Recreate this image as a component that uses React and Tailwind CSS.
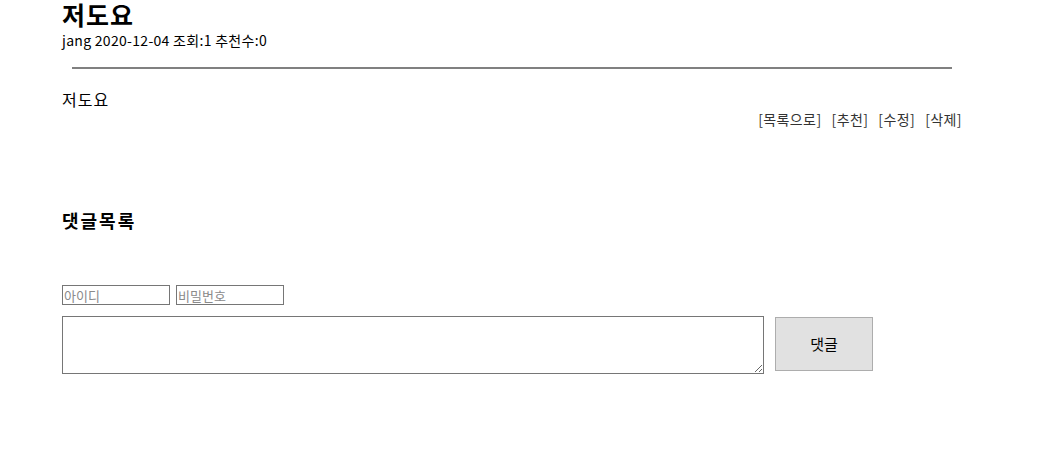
import { useState } from 'react';

const font = "font-['Malgun_Gothic','Noto_Sans_CJK_KR',sans-serif]";

const App = () => {
  const [comment, setComment] = useState('');

  return (
    <div className={`min-h-[470px] bg-white text-black ${font}`}>
      <div className="ml-[62px] w-[900px]">
        <h1 className="text-[25px] font-bold leading-[29px] tracking-[1px]">저도요</h1>
        <p className="text-[14px] leading-[20px] tracking-[0.3px] mt-[1px]">jang 2020-12-04 조회:1 추천수:0</p>
        <hr className="mx-[10px] mt-[17px] border-0 h-[2px] bg-[#808080]" />
        <p className="mt-[19px] text-[16px] leading-[22px] tracking-[1px]">저도요</p>
        <div className="flex justify-end gap-[10px] text-[14px] leading-[18px] tracking-[0.4px] text-[#333]">
          <a href="#">[목록으로]</a>
          <a href="#">[추천]</a>
          <a href="#">[수정]</a>
          <a href="#">[삭제]</a>
        </div>
        <h3 className="mt-[80px] text-[18px] font-bold leading-[24px] tracking-[2px]">댓글목록</h3>
        <form className="mt-[53px]" onSubmit={(e) => e.preventDefault()}>
          <div className="flex gap-[6px]">
            <input className="w-[108px] h-[20px] border border-[#767676] px-[1px] text-[13px] placeholder:text-[#8a8a8a]" placeholder="아이디" />
            <input type="password" className="w-[108px] h-[20px] border border-[#767676] px-[1px] text-[13px] placeholder:text-[#8a8a8a]" placeholder="비밀번호" />
          </div>
          <div className="flex items-start gap-[11px] mt-[11px]">
            <textarea value={comment} onChange={(e) => setComment(e.target.value)} className="w-[702px] h-[58px] border border-[#767676] resize" />
            <button className="w-[98px] h-[54px] mt-[1px] bg-[#e1e1e1] border border-[#adadad] text-[15px]">댓글</button>
          </div>
        </form>
      </div>
    </div>
  );
};

export default App;
